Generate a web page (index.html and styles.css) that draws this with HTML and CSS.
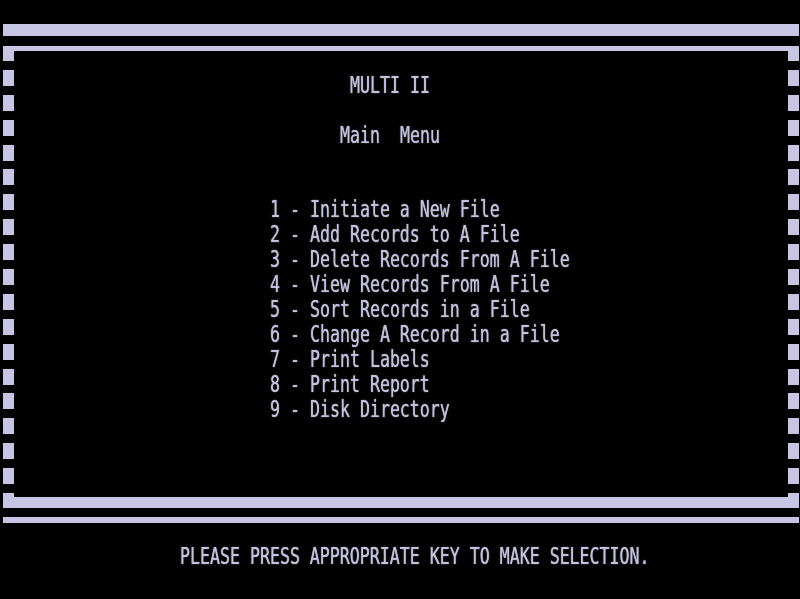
FILE: index.html
```html
<!DOCTYPE html>
<html lang="en">
<head>
  <meta charset="UTF-8" />
  <meta name="viewport" content="width=device-width, initial-scale=1.0"/>
  <title>MULTI II - Main Menu</title>
  <link rel="stylesheet" href="styles.css">
</head>
<body>
  <div class="screen">
    <div class="bar bar-thick"></div>

    <div class="frame">
      <div class="edge">
        <span class="corner"></span>
        <span class="block"></span><span class="block"></span><span class="block"></span>
        <span class="block"></span><span class="block"></span><span class="block"></span>
        <span class="block"></span><span class="block"></span><span class="block"></span>
        <span class="block"></span><span class="block"></span><span class="block"></span>
        <span class="block"></span><span class="block"></span><span class="block"></span>
        <span class="block"></span><span class="block"></span>
        <span class="corner corner-bottom"></span>
      </div>

      <div class="panel">
        <div class="line title">MULTI II</div>
        <div class="line"></div>
        <div class="line subtitle">Main  Menu</div>
        <div class="line"></div>
        <div class="line"></div>
        <ul class="menu">
          <li class="line">1 - Initiate a New File</li>
          <li class="line">2 - Add Records to A File</li>
          <li class="line">3 - Delete Records From A File</li>
          <li class="line">4 - View Records From A File</li>
          <li class="line">5 - Sort Records in a File</li>
          <li class="line">6 - Change A Record in a File</li>
          <li class="line">7 - Print Labels</li>
          <li class="line">8 - Print Report</li>
          <li class="line">9 - Disk Directory</li>
        </ul>
      </div>

      <div class="edge">
        <span class="corner"></span>
        <span class="block"></span><span class="block"></span><span class="block"></span>
        <span class="block"></span><span class="block"></span><span class="block"></span>
        <span class="block"></span><span class="block"></span><span class="block"></span>
        <span class="block"></span><span class="block"></span><span class="block"></span>
        <span class="block"></span><span class="block"></span><span class="block"></span>
        <span class="block"></span><span class="block"></span>
        <span class="corner corner-bottom"></span>
      </div>
    </div>

    <div class="bar bar-thin"></div>

    <div class="line prompt">PLEASE PRESS APPROPRIATE KEY TO MAKE SELECTION.</div>
  </div>
</body>
</html>
```

FILE: styles.css
```css
/* 80 column text screen, light lavender on black */
body {
  margin: 0;
  padding: 0;
  background-color: #000;
}

.screen {
  width: 800px;
  height: 599px;
  padding-top: 24px;
  box-sizing: border-box;
  background-color: #000;
  color: #c2c2de;
  font-family: "DejaVu Sans Mono", "Liberation Mono", monospace;
  font-size: 16.6px;
  filter: blur(0.45px);
  overflow: hidden;
}

/* Horizontal rules */
.bar {
  margin: 0 1px 0 3px;
  background-color: #c6c6e4;
}

.bar-thick {
  height: 12px;
}

.bar-thin {
  height: 6px;
  margin-top: 9px;
}

/* Boxed area with dashed sides */
.frame {
  display: grid;
  grid-template-columns: 11px 1fr 11px;
  height: 462px;
  box-sizing: border-box;
  margin: 10px 1px 0 3px;
  border-top: 5px solid #c6c6e4;
  border-bottom: 11px solid #c6c6e4;
}

.edge {
  display: flex;
  flex-direction: column;
  gap: 8.9px;
}

.edge span {
  display: block;
  background-color: #c6c6e4;
}

.corner {
  height: 10px;
}

.corner-bottom {
  height: 4px;
  margin-top: auto;
}

.block {
  height: 16px;
}

/* Text rows */
.panel {
  padding-top: 23px;
}

.line {
  height: 24.9px;
  line-height: 24.9px;
  white-space: pre;
  transform: scaleY(1.38);
  text-shadow: 0 0 1px #c2c2de;
}

.title {
  padding-left: 336px;
}

.subtitle {
  padding-left: 326px;
}

.menu {
  list-style: none;
  margin: 0;
  padding: 0 0 0 256px;
}

.prompt {
  margin-top: 22px;
  padding-left: 180px;
}
```
